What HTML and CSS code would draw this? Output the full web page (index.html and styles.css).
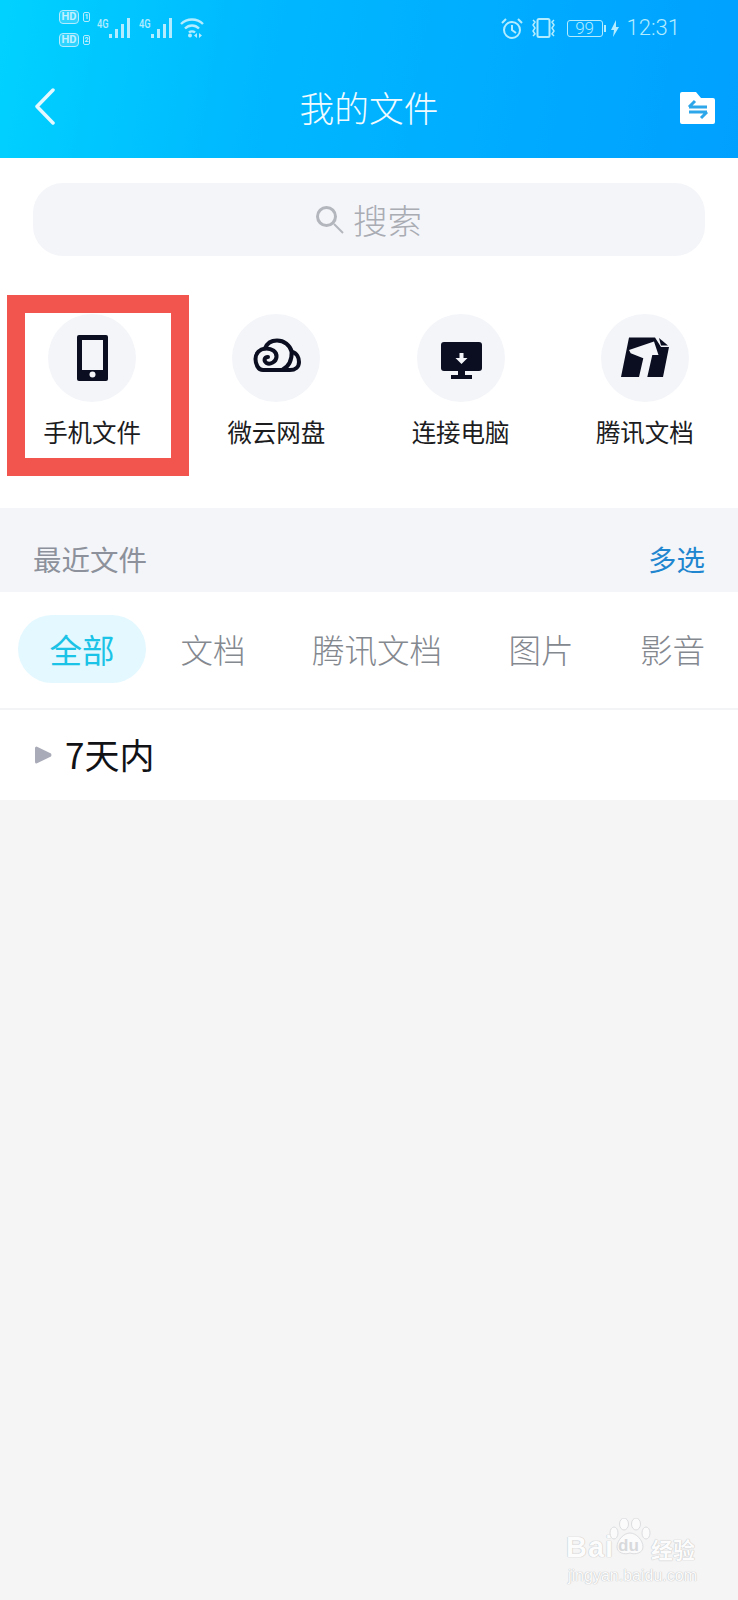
FILE: index.html
```html
<!DOCTYPE html>
<html lang="zh-CN">
<head>
<meta charset="utf-8">
<title>我的文件</title>
<link rel="stylesheet" href="styles.css">
</head>
<body>
<div class="app">
  <header class="header">
    <div class="status">
      <div class="status-left">
        <div class="hd-stack">
          <div class="hd-line"><span class="hd">HD</span><span class="sim">1</span></div>
          <div class="hd-line"><span class="hd">HD</span><span class="sim">2</span></div>
        </div>
        <div class="signal"><span class="net">4G</span>
          <svg class="bars" width="23" height="20" viewBox="0 0 23 20"><path d="M1 16h3v4H1zM7 11h3v9H7zM13 6h3v14h-3zM19 0h3v20h-3z"/></svg>
        </div>
        <div class="signal"><span class="net">4G</span>
          <svg class="bars" width="23" height="20" viewBox="0 0 23 20"><path d="M1 16h3v4H1zM7 11h3v9H7zM13 6h3v14h-3zM19 0h3v20h-3z"/></svg>
        </div>
        <svg class="wifi" width="26" height="21" viewBox="0 0 26 21" fill="none"><path d="M2 7C8 1 18 1 24 7M6 11.500c4-4 10-4 14 0M10 15.500c1.500-1.500 4.500-1.500 6 0" stroke="#b3ecff" stroke-width="2.400"/><circle cx="11" cy="18.500" r="2" fill="#b3ecff"/><path d="M18 16v5l-3-2.500zM20 16v5l3-2.500z" fill="#b3ecff"/></svg>
      </div>
      <div class="status-right">
        <svg width="22" height="21" viewBox="0 0 22 21" fill="none" stroke="#b3ecff" stroke-width="2"><circle cx="11" cy="12" r="8"/><path d="M11 7v5l4 3M1 5l4-4M21 5l-4-4"/></svg>
        <svg class="vibrate" width="27" height="20" viewBox="0 0 27 20" fill="none" stroke="#b3ecff" stroke-width="1.500"><rect x="7.500" y="1" width="12" height="18" rx="1.500" stroke-width="2"/><path d="M3 2l2 2-2 3 2 3-2 3 2 3-2 2M24 2l-2 2 2 3-2 3 2 3-2 3 2 2"/></svg>
        <div class="battery"><span class="battery-body">99</span><span class="battery-cap"></span></div>
        <svg class="bolt" width="8" height="17" viewBox="0 0 8 17"><path d="M5 0L0 10h3l-1 7 6-10H5z" fill="#b3ecff"/></svg>
        <span class="time">12:31</span>
      </div>
    </div>
    <nav class="nav">
      <svg class="back" width="20" height="37" viewBox="0 0 20 37" fill="none"><path d="M18 2L2 18.500 18 35" stroke="#e4f8ff" stroke-width="3.500" stroke-linecap="round" stroke-linejoin="round"/></svg>
      <h1 class="title">我的文件</h1>
      <svg class="folder" width="35" height="32" viewBox="0 0 35 32"><path d="M2 0h14l5 6h12a2 2 0 0 1 2 2v22a2 2 0 0 1-2 2H2a2 2 0 0 1-2-2V2a2 2 0 0 1 2-2z" fill="#fff"/><path d="M9 15H27M9 15L15 9M27 20H9M27 20L21 26" fill="none" stroke="#2ea6ea" stroke-width="3"/></svg>
    </nav>
  </header>

  <section class="search-wrap">
    <div class="search">
      <svg width="28" height="28" viewBox="0 0 28 28" fill="none" stroke="#b3b6bd"><circle cx="10.500" cy="10.500" r="9" stroke-width="3"/><path d="M18 18l9 9" stroke-width="2"/></svg>
      <span class="search-text">搜索</span>
    </div>
  </section>

  <section class="shortcuts">
    <div class="shortcut">
      <svg class="circle" width="88" height="88" viewBox="0 0 88 88"><circle cx="44" cy="44" r="44" fill="#f4f5f9"/><rect x="29" y="21" width="31" height="46" rx="2" fill="#0a0e20"/><rect x="34" y="26" width="21" height="30" fill="#f4f5f9"/><circle cx="44.500" cy="60.500" r="3" fill="#f4f5f9"/></svg>
      <span class="label">手机文件</span>
    </div>
    <div class="shortcut">
      <svg class="circle" width="88" height="88" viewBox="0 0 88 88"><circle cx="44" cy="44" r="44" fill="#f4f5f9"/><g fill="none" stroke="#0a0e20" stroke-width="4" stroke-linecap="round" stroke-linejoin="round"><path d="M31 56C26 56 23.500 50 23.500 45C23.500 39 28 35 33 34.500C35 29 40 26.500 45 26.500C52 26.500 58 31 59.700 37.700C65 39 67 44 67 48C67 53 63 56 58 56Z"/><path d="M33 34.500C40 34 45 38 44.500 43C44 48 38 51 34.500 49C31.500 47 32 43 36 43"/><path d="M59.700 37.700C60 47 56 53 50 56"/></g></svg>
      <span class="label">微云网盘</span>
    </div>
    <div class="shortcut">
      <svg class="circle" width="88" height="88" viewBox="0 0 88 88"><circle cx="44" cy="44" r="44" fill="#f4f5f9"/><rect x="24" y="28" width="41" height="29" rx="3" fill="#0a0e20"/><path d="M41 56h7v5h7v4H34v-4h7z" fill="#0a0e20"/><path d="M42.500 39h4v5h4l-6 6-6-6h4z" fill="#f4f5f9"/></svg>
      <span class="label">连接电脑</span>
    </div>
    <div class="shortcut">
      <svg class="circle" width="88" height="88" viewBox="0 0 88 88"><circle cx="44" cy="44" r="44" fill="#f4f5f9"/><path d="M28 23.500H54L60 33L68 33L62 63H20Z" fill="#0a0e20"/><path d="M58 24L67 31.500L60 31.500Z" fill="#0a0e20"/><path d="M28 36L53 27.500L57.500 41H51.300L46.300 63H38L42.300 44.300L29.700 39.300Z" fill="#f4f5f9"/></svg>
      <span class="label">腾讯文档</span>
    </div>
  </section>

  <section class="recent">
    <span class="recent-title">最近文件</span>
    <span class="recent-action">多选</span>
  </section>

  <section class="tabs">
    <span class="tab tab-active">全部</span>
    <span class="tab">文档</span>
    <span class="tab">腾讯文档</span>
    <span class="tab">图片</span>
    <span class="tab">影音</span>
  </section>

  <section class="group">
    <svg width="17" height="18" viewBox="0 0 17 18"><path d="M1.500 0.500L16 7.500Q17 9 16 10.500L1.500 17.500Q0 17.500 0 16V2Q0 0.500 1.500 0.500Z" fill="#a9abb8"/></svg>
    <span class="group-name">7天内</span>
  </section>

  <div class="watermark">
    <div class="wm-top">
      <span class="wm-bai">Bai</span>
      <div class="wm-paw">
        <svg width="42" height="38" viewBox="0 0 42 38" fill="#fbfbfb" stroke="#dcdddf"><ellipse cx="5" cy="15" rx="4" ry="6"/><ellipse cx="15" cy="6" rx="4.500" ry="6"/><ellipse cx="27" cy="6" rx="4.500" ry="6"/><ellipse cx="37" cy="15" rx="4" ry="6"/><path d="M21 15c6 0 13 7 13 14 0 6-8 8-13 6-5 2-13 0-13-6 0-7 7-14 13-14z"/></svg>
        <span class="wm-du">du</span>
      </div>
      <span class="wm-cn">经验</span>
    </div>
    <div class="wm-url">jingyan.baidu.com</div>
  </div>

  <div class="highlight"></div>
</div>
</body>
</html>
```

FILE: styles.css
```css
* { box-sizing: border-box; margin: 0; padding: 0; }

body {
  background: #f5f5f6;
  font-family: "Noto Sans CJK SC", "Noto Sans", sans-serif;
}

.app {
  position: relative;
  width: 738px;
  height: 1600px;
  overflow: hidden;
  background: #f5f5f6;
}

/* Header */
.header {
  height: 158px;
  background: linear-gradient(100deg, #00d2ff 0%, #00b8ff 35%, #00a0ff 100%);
}

.status {
  height: 56px;
  display: flex;
  justify-content: space-between;
  padding: 8px 58px 0 59px;
}

.status-left { display: flex; align-items: flex-start; }

.hd-stack {
  display: flex;
  flex-direction: column;
  gap: 9px;
  padding-top: 2px;
  width: 38px;
}

.hd-line { display: flex; align-items: center; gap: 4px; height: 14px; }

.hd {
  font: 700 11px/11px "Roboto", sans-serif;
  color: #c0f0ff;
  background: rgba(255, 255, 255, .18);
  border: 1.500px solid #b3ecff;
  border-radius: 4px;
  width: 20px;
  height: 14px;
  text-align: center;
}

.sim {
  font: 700 7px/8px "Roboto", sans-serif;
  color: #c0f0ff;
  border: 1px solid #b3ecff;
  border-radius: 2px;
  width: 7px;
  height: 10px;
  text-align: center;
}

.signal { display: flex; align-items: flex-start; width: 42px; padding-top: 9px; }

.net {
  font: 500 13px/13px "Roboto", sans-serif;
  color: #b3ecff;
  width: 11px;
  transform: scaleX(.72);
  transform-origin: left;
}

.bars { fill: #b3ecff; margin-top: 1px; }

.wifi { margin: 9px 0 0 -2px; }

.status-right {
  display: flex;
  align-items: center;
  height: 40px;
}

.vibrate { margin-left: 7px; }

.battery { display: flex; align-items: center; margin-left: 10px; }

.battery-body {
  width: 36px;
  height: 17px;
  border: 1px solid #b3ecff;
  border-radius: 3px;
  font: 300 17px/15px "Roboto", sans-serif;
  color: #b3ecff;
  text-align: center;
}

.battery-cap {
  width: 2px;
  height: 7px;
  margin-left: 1px;
  background: #b3ecff;
}

.bolt { margin-left: 5px; }

.time {
  margin-left: 8px;
  font: 300 22px/40px "Roboto", sans-serif;
  color: #b3ecff;
}

.nav {
  height: 102px;
  display: flex;
  align-items: center;
  justify-content: space-between;
  padding: 0 23px 0 35px;
}

.title {
  font-size: 34.700px;
  font-weight: 300;
  line-height: 48px;
  color: #f2fbff;
  margin-left: 3px;
}

.back { margin-top: -2px; }

.folder { margin-top: 1px; }

/* Search */
.search-wrap {
  background: #fff;
  padding: 25px 33px 0;
}

.search {
  height: 73px;
  border-radius: 30px;
  background: #f4f5f9;
  display: flex;
  align-items: center;
  justify-content: center;
  gap: 9px;
}

.search-text {
  font-size: 34.500px;
  line-height: 44px;
  font-weight: 300;
  color: #a9acb3;
  margin-top: -2px;
}

/* Shortcuts */
.shortcuts {
  display: grid;
  grid-template-columns: repeat(4, 1fr);
  background: #fff;
  padding: 58px 1px 60px 0;
}

.shortcut {
  display: flex;
  flex-direction: column;
  align-items: center;
  gap: 14px;
}

.circle { display: block; }

.label {
  font-size: 24.500px;
  line-height: 32px;
  color: #1c1c1e;
}

/* Recent header */
.recent {
  height: 84px;
  background: #f4f5f9;
  display: flex;
  justify-content: space-between;
  padding: 35px 33px 17px;
  font-size: 28.500px;
  line-height: 32px;
}

.recent-title { color: #8c919b; }

.recent-action { color: #1f86cf; }

/* Tabs */
.tabs {
  height: 118px;
  background: #fff;
  border-bottom: 2px solid #f3f4f6;
  display: flex;
  align-items: flex-start;
  gap: 2.500px;
  padding: 23px 0 0 18px;
}

.tab {
  height: 68px;
  padding: 0 32px;
  border-radius: 34px;
  font-size: 32.500px;
  line-height: 67px;
  font-weight: 300;
  color: #84888f;
  white-space: nowrap;
}

.tab-active {
  background: #e3f8ff;
  color: #1bc3e6;
  font-weight: 400;
  padding: 0 31.500px;
}

/* Group row */
.group {
  height: 90px;
  background: #fff;
  display: flex;
  align-items: center;
  gap: 13px;
  padding: 0 0 0 35px;
}

.group-name {
  font-size: 35px;
  line-height: 44px;
  color: #111216;
  margin-top: -3px;
}

/* Watermark */
.watermark {
  position: absolute;
  left: 566px;
  top: 1518px;
  width: 136px;
  color: #fcfcfc;
  text-shadow: 0 0 1px #c0c1c3, 0 0 1px #c0c1c3;
}

.wm-top {
  display: flex;
  align-items: flex-end;
  height: 44px;
}

.wm-bai {
  font: 700 29px/30px "Liberation Sans", sans-serif;
  letter-spacing: 1px;
  width: 45px;
}

.wm-paw {
  position: relative;
  width: 42px;
  height: 44px;
  margin-left: -2px;
}

.wm-du {
  position: absolute;
  left: 9px;
  top: 18px;
  font: 700 17px/20px "Liberation Sans", sans-serif;
  color: #d8d9db;
  text-shadow: none;
}

.wm-cn {
  font-size: 22px;
  line-height: 28px;
  font-weight: 700;
  white-space: nowrap;
}

.wm-url {
  font: 400 16px/20px "Liberation Sans", sans-serif;
  margin: 4px 0 0 2px;
  white-space: nowrap;
}

/* Annotation box */
.highlight {
  position: absolute;
  left: 7px;
  top: 295px;
  width: 182px;
  height: 181px;
  border: 18px solid #f1554d;
}
```
